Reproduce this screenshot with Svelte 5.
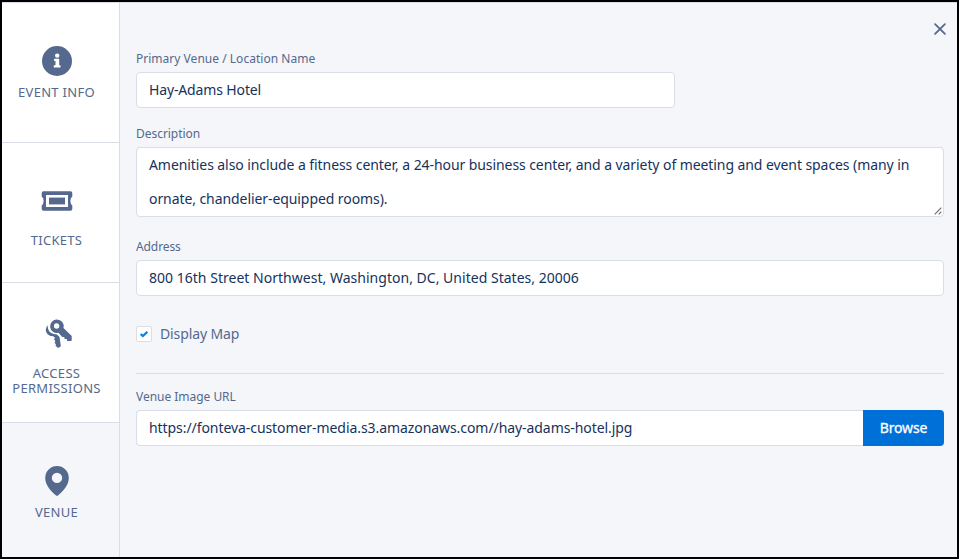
<script>
  let displayMap = $state(true);
</script>

<div class="frame">
  <nav class="side">
    <button class="tab info">
      <svg width="30" height="30" viewBox="0 0 30 30">
        <circle cx="15" cy="15" r="15" fill="#54698d" />
        <circle cx="15.2" cy="9.600" r="2.200" fill="#fff" />
        <path d="M12.100 12.800h5.100v6.400h1.300v2.300h-6.700v-2.300h1.700v-4.100h-1.400z" fill="#fff" />
      </svg>
      <span>EVENT INFO</span>
    </button>
    <button class="tab tickets">
      <svg width="32" height="20" viewBox="0 0 32 20">
        <path
          d="M2.500 .2h27A1.800 1.800 0 0 1 31.300 2V5.600Q29.400 7 29.400 10T31.300 14.400V18A1.800 1.800 0 0 1 29.500 19.800h-27A1.800 1.800 0 0 1 .700 18V14.400Q2.600 13 2.600 10T.700 5.600V2A1.800 1.800 0 0 1 2.500 .2zM5 4v12h22V4z"
          fill="#54698d"
          fill-rule="evenodd"
        />
        <rect x="8" y="6.600" width="16" height="6.800" fill="#54698d" />
      </svg>
      <span>TICKETS</span>
    </button>
    <button class="tab access">
      <svg width="28" height="30" viewBox="0 0 28 30">
        <path
          d="M12 .5a6.700 6.700 0 0 1 6.500 8.400L26.700 17v4.400l-.8.700h-3.700l-.4-2h-2.200l-.3-2.200h-2l-3.900-4.200A6.700 6.700 0 1 1 12 .500zM11.600 4.300a2.700 2.700 0 1 0 0 5.400 2.700 2.700 0 0 0 0-5.400z"
          fill="#54698d"
          fill-rule="evenodd"
        />
        <path
          d="M2.600 6.200Q-.2 9.600 1.300 13.200 3.300 17 8.200 17.200L10 18.800 9 20.400l1.400 1.500-.8 1.800 1.300 1.500-.4 1.600 2.600 2.200 2.800-1.800-1.400-9.200L12 15.600Q4.800 14.600 3.600 11.200 2.600 9 2.600 6.200z"
          fill="#54698d"
        />
      </svg>
      <span class="first">ACCESS</span>
      <span>PERMISSIONS</span>
    </button>
    <button class="tab venue">
      <svg width="24" height="30" viewBox="0 0 24 30">
        <path
          d="M12 0A11.800 11.800 0 0 1 23.800 11.800C23.800 19 18.600 24.800 12.900 29.600Q12 30.200 11.100 29.600C5.400 24.800.2 19 .2 11.800A11.800 11.800 0 0 1 12 0zM12 6.700a5.200 5.200 0 1 0 0 10.400 5.200 5.200 0 0 0 0-10.400z"
          fill="#54698d"
          fill-rule="evenodd"
        />
      </svg>
      <span>VENUE</span>
    </button>
  </nav>

  <main>
    <button class="close" aria-label="Close">
      <svg width="12" height="12" viewBox="0 0 12 12">
        <path d="M1.100 1.100l9.800 9.800M10.900 1.100l-9.800 9.800" stroke="#54698d" stroke-width="1.800" stroke-linecap="round" />
      </svg>
    </button>

    <div class="label t-name">Primary Venue / Location Name</div>
    <div class="box name">Hay-Adams Hotel</div>

    <div class="label t-desc">Description</div>
    <div class="box area">
      <span>Amenities also include a fitness center, a 24-hour business center, and a variety of meeting and event spaces (many in</span>
      <span>ornate, chandelier-equipped rooms).</span>
      <svg class="grip" width="8" height="8" viewBox="0 0 8 8">
        <path d="M.7 7.300L7.300.7M4.700 7.300L7.300 4.700" stroke="#666" stroke-width="1.100" />
      </svg>
    </div>

    <div class="label t-addr">Address</div>
    <div class="box addr">800 16th Street Northwest, Washington, DC, United States, 20006</div>

    <label class="check">
      <input type="checkbox" bind:checked={displayMap} />
      <span class="tick">
        {#if displayMap}
          <svg width="8" height="8" viewBox="0 0 8 8">
            <path d="M.7 4.100L2.900 6.100 7.400 1.800" fill="none" stroke="#0084f0" stroke-width="2.200" />
          </svg>
        {/if}
      </span>
      <span class="map">Display Map</span>
    </label>

    <hr />

    <div class="label t-url">Venue Image URL</div>
    <div class="row">
      <div class="box url">https://fonteva-customer-media.s3.amazonaws.com//hay-adams-hotel.jpg</div>
      <button class="browse">Browse</button>
    </div>
  </main>
</div>

<style>
  .frame {
    box-sizing: border-box;
    width: 959px;
    height: 559px;
    border: 2px solid #000;
    display: flex;
    background: #f4f6fa;
    overflow: hidden;
    font-family: "Noto Sans", "Open Sans", sans-serif;
    color: #54698d;
    box-shadow: inset 0 1px #d8dde6;
  }
  button {
    margin: 0;
    padding: 0;
    border: 0;
    background: none;
    font: inherit;
    color: inherit;
  }
  svg {
    display: block;
    flex: none;
  }
  .side {
    box-sizing: border-box;
    width: 118px;
    flex: none;
    border-right: 1px solid #d8dde6;
    padding-top: 1px;
    display: flex;
    flex-direction: column;
  }
  .tab {
    box-sizing: border-box;
    height: 140px;
    flex: none;
    background: #fff;
    border-bottom: 1px solid #d8dde6;
    display: flex;
    flex-direction: column;
    align-items: center;
    font-size: 13px;
    line-height: 15px;
    white-space: nowrap;
    text-align: center;
  }
  .tab svg { margin-left: -7px; }
  .tab span { margin-left: -8px; letter-spacing: 0.3px; }
  .info { padding-top: 43px; }
  .info span { margin-top: 9px; }
  .tickets { padding-top: 48px; }
  .tickets span { margin-top: 22px; }
  .access { padding-top: 36px; }
  .access svg { margin-left: -4px; }
  .access .first { margin-top: 17px; }
  .venue { background: none; border: 0; padding-top: 43px; height: 134px; }
  .venue span { margin-top: 9px; }

  main {
    flex: 1;
    min-width: 0;
    padding: 0 13px 0 16px;
    display: flex;
    flex-direction: column;
  }
  .close {
    align-self: flex-end;
    margin: 21px -2px 0 0;
    height: 12px;
  }
  .label {
    font-size: 12px;
    line-height: 16px;
    height: 16px;
    white-space: nowrap;
  }
  .box {
    box-sizing: border-box;
    height: 36px;
    background: #fff;
    border: 1px solid #d8dde6;
    border-radius: 4px;
    padding: 0 12px;
    font-size: 14px;
    line-height: 34px;
    color: #16325c;
    white-space: nowrap;
  }
  .t-name { margin: 16px 0 5px; letter-spacing: 0.02px; }
  .name { width: 539px; letter-spacing: -0.14px; }
  .t-desc { margin: 18px 0 5px; letter-spacing: -0.04px; }
  .area { height: 70px; position: relative; letter-spacing: -0.078px; }
  .area span { display: block; }
  .grip { position: absolute; right: 1px; bottom: 1px; }
  .t-addr { margin: 22px 0 5px; letter-spacing: -0.1px; }
  .addr { letter-spacing: 0.02px; }
  .check {
    margin-top: 28px;
    height: 20px;
    display: flex;
    align-items: center;
    gap: 8px;
    font-size: 14px;
    line-height: 20px;
  }
  .check input { display: none; }
  .map { letter-spacing: -0.12px; }
  .tick {
    box-sizing: border-box;
    width: 16px;
    height: 16px;
    border: 1px solid #d8dde6;
    border-radius: 2px;
    background: #fff;
    display: grid;
    place-items: center;
  }
  hr {
    width: 100%;
    margin: 29px 0 0;
    border: 0;
    height: 1px;
    background: #d8dde6;
  }
  .t-url { margin: 15px 0 5px; letter-spacing: -0.03px; }
  .row { display: flex; }
  .url { flex: 1; border-radius: 4px 0 0 4px; border-right: 0; letter-spacing: -0.068px; }
  .browse {
    width: 81px;
    height: 36px;
    background: #0070d9;
    color: #fff;
    border-radius: 0 4px 4px 0;
    font-size: 14px;
    line-height: 36px;
    letter-spacing: -0.15px;
    -webkit-text-stroke: 0.3px #fff;
  }
</style>
